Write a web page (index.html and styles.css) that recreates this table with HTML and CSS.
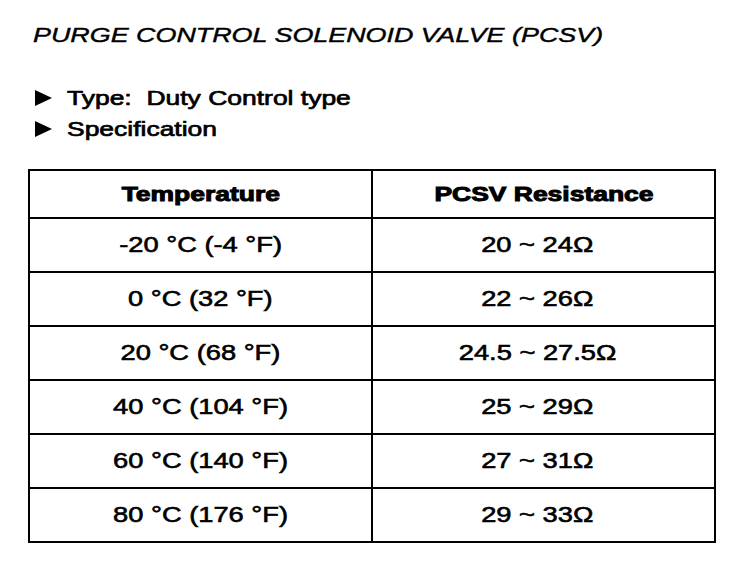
FILE: index.html
```html
<!DOCTYPE html>
<html>
<head>
<meta charset="utf-8">
<link rel="stylesheet" href="styles.css">
</head>
<body>
<div class="page">
  <h1 class="title"><span class="wide">PURGE CONTROL SOLENOID VALVE (PCSV)</span></h1>
  <ul class="bullets">
    <li><span class="tri"></span><span class="wide">Type:&nbsp; Duty Control type</span></li>
    <li><span class="tri"></span><span class="wide">Specification</span></li>
  </ul>
  <table class="spec">
    <thead>
      <tr><th><span class="wide">Temperature</span></th><th><span class="wide">PCSV Resistance</span></th></tr>
    </thead>
    <tbody>
      <tr><td><span class="wide">-20 °C (-4 °F)</span></td><td><span class="wide">20 ~ 24Ω</span></td></tr>
      <tr><td><span class="wide">0 °C (32 °F)</span></td><td><span class="wide">22 ~ 26Ω</span></td></tr>
      <tr><td><span class="wide">20 °C (68 °F)</span></td><td><span class="wide">24.5 ~ 27.5Ω</span></td></tr>
      <tr><td><span class="wide">40 °C (104 °F)</span></td><td><span class="wide">25 ~ 29Ω</span></td></tr>
      <tr><td><span class="wide">60 °C (140 °F)</span></td><td><span class="wide">27 ~ 31Ω</span></td></tr>
      <tr><td><span class="wide">80 °C (176 °F)</span></td><td><span class="wide">29 ~ 33Ω</span></td></tr>
    </tbody>
  </table>
</div>
</body>
</html>
```

FILE: styles.css
```css
html, body {
  margin: 0;
  padding: 0;
  background: #ffffff;
}
.page {
  width: 752px;
  height: 570px;
  padding: 22px 0 0 28px;
  box-sizing: border-box;
  font-family: "Liberation Sans", Arial, sans-serif;
  color: #000;
}
.wide {
  display: inline-block;
  white-space: pre;
}
.title {
  margin: 0 0 0 5px;
  font-size: 21px;
  font-weight: normal;
  font-style: italic;
  line-height: 26px;
  -webkit-text-stroke: 0.4px #000;
}
.title .wide {
  transform: scaleX(1.28);
  transform-origin: left center;
}
.bullets {
  list-style: none;
  margin: 34px 0 0 7px;
  padding: 0;
}
.bullets li {
  display: flex;
  align-items: center;
  font-size: 21px;
  line-height: 31px;
  height: 31px;
  -webkit-text-stroke: 0.7px #000;
}
.bullets .wide {
  transform: scaleX(1.26);
  transform-origin: left center;
}
.tri {
  width: 0;
  height: 0;
  border-top: 8px solid transparent;
  border-bottom: 8px solid transparent;
  border-left: 17px solid #000;
  margin-right: 15px;
}
.spec {
  margin-top: 25px;
  border-collapse: collapse;
  width: 688px;
}
.spec th, .spec td {
  border: 2px solid #000;
  text-align: center;
  width: 50%;
  padding: 0;
}
.spec .wide {
  transform-origin: center center;
}
.spec th {
  height: 46px;
  font-size: 21px;
  font-weight: bold;
  -webkit-text-stroke: 1px #000;
}
.spec th .wide {
  transform: scaleX(1.26);
}
.spec td {
  height: 52px;
  font-size: 22px;
  -webkit-text-stroke: 0.6px #000;
}
.spec td .wide {
  transform: scaleX(1.24);
}
.spec td + td .wide {
  position: relative;
  left: -6px;
}
```
